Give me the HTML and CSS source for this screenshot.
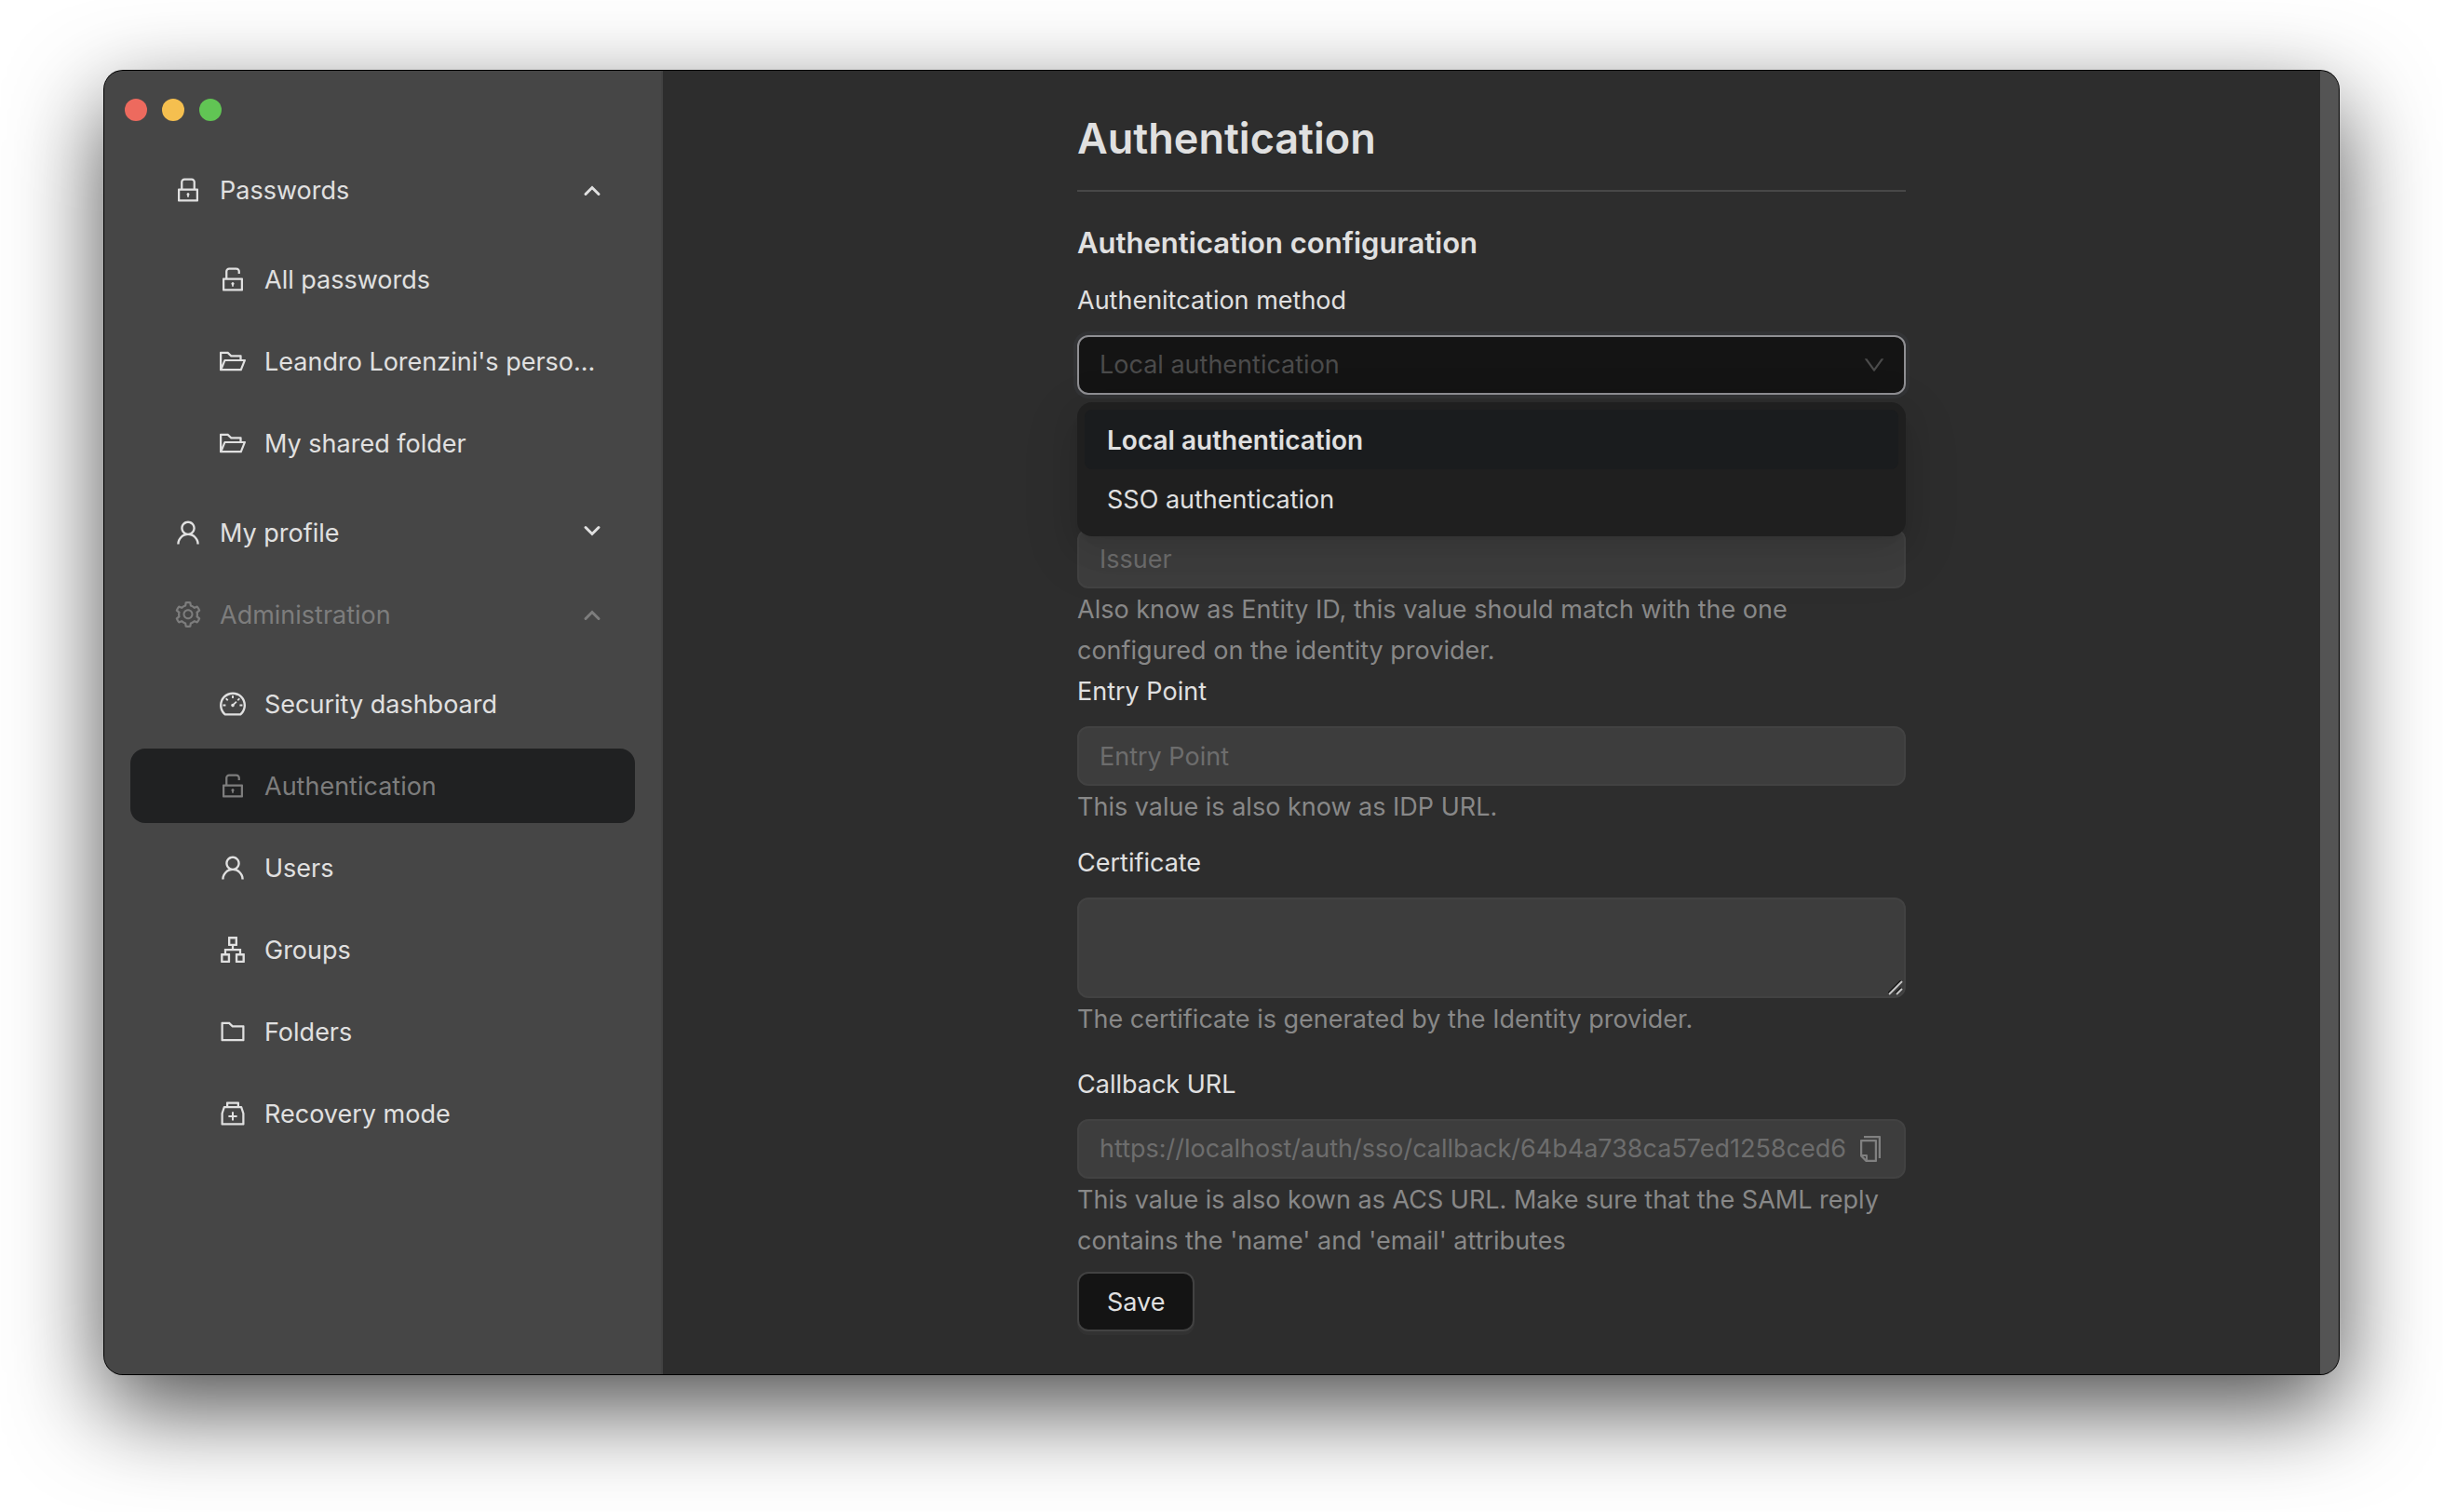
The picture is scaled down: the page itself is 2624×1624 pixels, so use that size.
FILE: index.html
```html
<!DOCTYPE html>
<html lang="en">
<head>
<meta charset="utf-8">
<meta name="viewport" content="width=device-width, initial-scale=1">
<title>Authentication</title>
<link rel="stylesheet" href="styles.css">
</head>
<body>
<svg class="sprite" aria-hidden="true">
  <symbol id="lock" viewBox="64 64 896 896"><path d="M832 464h-68V240c0-70.7-57.3-128-128-128H388c-70.7 0-128 57.3-128 128v224h-68c-17.7 0-32 14.3-32 32v384c0 17.7 14.3 32 32 32h640c17.7 0 32-14.3 32-32V496c0-17.7-14.3-32-32-32zM332 240c0-30.9 25.1-56 56-56h248c30.9 0 56 25.1 56 56v224H332V240zm460 600H232V536h560v304zM484 701v53c0 4.4 3.6 8 8 8h40c4.4 0 8-3.6 8-8v-53a48.01 48.01 0 10-56 0z"/></symbol>
  <symbol id="unlock" viewBox="64 64 896 896"><path d="M832 464H332V240c0-30.9 25.1-56 56-56h248c30.9 0 56 25.1 56 56v68c0 4.4 3.6 8 8 8h56c4.4 0 8-3.6 8-8v-68c0-70.7-57.3-128-128-128H388c-70.7 0-128 57.3-128 128v224h-68c-17.7 0-32 14.3-32 32v384c0 17.7 14.3 32 32 32h640c17.7 0 32-14.3 32-32V496c0-17.7-14.3-32-32-32zm-40 376H232V536h560v304zM484 701v53c0 4.4 3.6 8 8 8h40c4.4 0 8-3.6 8-8v-53a48.01 48.01 0 10-56 0z"/></symbol>
  <symbol id="folder-open" viewBox="64 64 896 896"><path d="M928 444H820V330.4c0-17.7-14.3-32-32-32H473L355.7 186.2a8.15 8.15 0 00-5.5-2.2H96c-17.7 0-32 14.3-32 32v592c0 17.7 14.3 32 32 32h698c13 0 24.8-7.9 29.7-20l134-332c1.5-3.8 2.3-7.9 2.3-12 0-17.7-14.3-32-32-32zM136 256h188.5l119.6 114.4H748V444H238c-13 0-24.8 7.9-29.7 20L136 643.2V256zm635.3 512H159l103.3-256h612.4L771.3 768z"/></symbol>
  <symbol id="folder" viewBox="64 64 896 896"><path d="M880 298.4H521L403.7 186.2a8.15 8.15 0 00-5.5-2.2H144c-17.7 0-32 14.3-32 32v592c0 17.7 14.3 32 32 32h736c17.7 0 32-14.3 32-32V330.4c0-17.7-14.3-32-32-32zM840 768H184V256h188.5l119.6 114.4H840V768z"/></symbol>
  <symbol id="user" viewBox="64 64 896 896"><path d="M858.5 763.6a374 374 0 00-80.6-119.5 375.63 375.63 0 00-119.5-80.6c-.4-.2-.8-.3-1.2-.5C719.5 518 760 444.7 760 362c0-137-111-248-248-248S264 225 264 362c0 82.7 40.5 156 102.8 201.1-.4.2-.8.3-1.2.5-44.8 18.9-85 46-119.5 80.6a375.63 375.63 0 00-80.6 119.5A371.7 371.7 0 00136 901.8a8 8 0 008 8.2h60c4.4 0 7.9-3.5 8-7.8 2-77.2 33-149.5 87.8-204.3 56.7-56.7 132-87.9 212.2-87.9s155.5 31.2 212.2 87.9C779 752.7 810 825 812 902.2c.1 4.4 3.6 7.8 8 7.8h60a8 8 0 008-8.2c-1-47.8-10.9-94.3-29.5-138.2zM512 534c-45.9 0-89.1-17.9-121.6-50.4S340 407.9 340 362c0-45.9 17.9-89.1 50.4-121.6S466.1 190 512 190s89.1 17.9 121.6 50.4S684 316.1 684 362c0 45.9-17.9 89.1-50.4 121.6S557.9 534 512 534z"/></symbol>
  <symbol id="gear" viewBox="64 64 896 896"><path d="M924.8 625.7l-65.5-56c3.1-19 4.7-38.4 4.7-57.8s-1.6-38.8-4.7-57.8l65.5-56a32.03 32.03 0 009.3-35.2l-.9-2.6a443.74 443.74 0 00-79.7-137.9l-1.8-2.1a32.12 32.12 0 00-35.1-9.5l-81.3 28.9c-30-24.6-63.5-44-99.7-57.6l-15.7-85a32.05 32.05 0 00-25.8-25.7l-2.7-.5c-52.1-9.4-106.9-9.4-159 0l-2.7.5a32.05 32.05 0 00-25.8 25.7l-15.8 85.4a351.86 351.86 0 00-99 57.4l-81.9-29.1a32 32 0 00-35.1 9.5l-1.8 2.1a446.02 446.02 0 00-79.7 137.9l-.9 2.6c-4.5 12.5-.8 26.5 9.3 35.2l66.3 56.6c-3.1 18.8-4.6 38-4.6 57.1 0 19.2 1.5 38.4 4.6 57.1L99 625.5a32.03 32.03 0 00-9.3 35.2l.9 2.6c18.1 50.4 44.9 96.9 79.7 137.9l1.8 2.1a32.12 32.12 0 0035.1 9.5l81.9-29.1c29.8 24.5 63.1 43.9 99 57.4l15.8 85.4a32.05 32.05 0 0025.8 25.7l2.7.5a449.4 449.4 0 00159 0l2.7-.5a32.05 32.05 0 0025.8-25.7l15.7-85a350 350 0 0099.7-57.6l81.3 28.9a32 32 0 0035.1-9.5l1.8-2.1c34.8-41.1 61.6-87.5 79.7-137.9l.9-2.6c4.5-12.3.8-26.3-9.3-35zM788.3 465.9c2.5 15.1 3.8 30.6 3.8 46.1s-1.3 31-3.8 46.1l-6.6 40.1 74.7 63.9a370.03 370.03 0 01-42.6 73.6L721 702.8l-31.4 25.8c-23.9 19.6-50.5 35-79.3 45.8l-38.1 14.3-17.9 97a377.5 377.5 0 01-85 0l-17.9-97.2-37.8-14.5c-28.5-10.8-55-26.2-78.7-45.7l-31.4-25.9-93.4 33.2c-17-22.9-31.2-47.6-42.6-73.6l75.5-64.5-6.5-40c-2.4-14.9-3.7-30.3-3.7-45.5 0-15.3 1.2-30.6 3.7-45.5l6.5-40-75.5-64.5c11.3-26.1 25.6-50.7 42.6-73.6l93.4 33.2 31.4-25.9c23.7-19.5 50.2-34.9 78.7-45.7l37.9-14.3 17.9-97.2c28.1-3.2 56.8-3.2 85 0l17.9 97 38.1 14.3c28.7 10.8 55.4 26.2 79.3 45.8l31.4 25.8 92.8-32.9c17 22.9 31.2 47.6 42.6 73.6L781.8 426l6.5 39.9zM512 326c-97.2 0-176 78.8-176 176s78.8 176 176 176 176-78.8 176-176-78.8-176-176-176zm79.2 255.2A111.6 111.6 0 01512 614c-29.9 0-58-11.7-79.2-32.8A111.6 111.6 0 01400 502c0-29.9 11.7-58 32.8-79.2C454 401.6 482.1 390 512 390c29.9 0 58 11.6 79.2 32.8A111.6 111.6 0 01624 502c0 29.9-11.7 58-32.8 79.2z"/></symbol>
  <symbol id="dashboard" viewBox="64 64 896 896"><path d="M924.8 385.6a446.7 446.7 0 00-96-142.4 446.7 446.7 0 00-142.4-96C631.1 123.8 572.5 112 512 112s-119.1 11.8-174.4 35.2a446.7 446.7 0 00-142.4 96 446.7 446.7 0 00-96 142.4C75.8 440.9 64 499.5 64 560c0 132.7 58.3 257.7 159.9 343.1l1.7 1.4c5.8 4.8 13.1 7.5 20.6 7.5h531.7c7.5 0 14.8-2.7 20.6-7.5l1.7-1.4C901.7 817.7 960 692.7 960 560c0-60.5-11.9-119.1-35.2-174.4zM761.4 836H262.6A371.12 371.12 0 01140 560c0-99.4 38.7-192.8 109-263 70.3-70.3 163.7-109 263-109 99.4 0 192.8 38.7 263 109 70.3 70.3 109 163.7 109 263 0 105.6-44.5 205.5-122.6 276zM623.5 421.5a8.03 8.03 0 00-11.3 0L527.7 506c-18.7-5-39.4-.2-54.1 14.5a55.95 55.95 0 000 79.2 55.95 55.95 0 0079.2 0 55.87 55.87 0 0014.5-54.1l84.5-84.5c3.1-3.1 3.1-8.2 0-11.3l-28.3-28.3zM490 320h44c4.4 0 8-3.6 8-8v-80c0-4.4-3.6-8-8-8h-44c-4.4 0-8 3.6-8 8v80c0 4.4 3.6 8 8 8zm260 218v44c0 4.4 3.6 8 8 8h80c4.4 0 8-3.6 8-8v-44c0-4.4-3.6-8-8-8h-80c-4.4 0-8 3.6-8 8zm12.7-197.2l-31.1-31.1a8.03 8.03 0 00-11.3 0l-56.6 56.6a8.03 8.03 0 000 11.3l31.1 31.1c3.1 3.1 8.2 3.1 11.3 0l56.6-56.6c3.1-3.1 3.1-8.2 0-11.3zm-458.6-31.1a8.03 8.03 0 00-11.3 0l-31.1 31.1a8.03 8.03 0 000 11.3l56.6 56.6c3.1 3.1 8.2 3.1 11.3 0l31.1-31.1c3.1-3.1 3.1-8.2 0-11.3l-56.6-56.6zM262 530h-80c-4.4 0-8 3.6-8 8v44c0 4.4 3.6 8 8 8h80c4.4 0 8-3.6 8-8v-44c0-4.4-3.6-8-8-8z"/></symbol>
  <symbol id="apartment" viewBox="64 64 896 896"><path d="M908 640H804V488c0-4.4-3.6-8-8-8H548v-96h108c8.8 0 16-7.2 16-16V80c0-8.8-7.2-16-16-16H368c-8.8 0-16 7.2-16 16v288c0 8.8 7.2 16 16 16h108v96H228c-4.4 0-8 3.6-8 8v152H116c-8.8 0-16 7.2-16 16v288c0 8.8 7.2 16 16 16h288c8.8 0 16-7.2 16-16V656c0-8.8-7.2-16-16-16H292v-88h440v88H620c-8.8 0-16 7.2-16 16v288c0 8.8 7.2 16 16 16h288c8.8 0 16-7.2 16-16V656c0-8.8-7.2-16-16-16zm-564 76v168H176V716h168zm84-408V140h168v168H428zm420 576H680V716h168v168z"/></symbol>
  <symbol id="medicine-box" viewBox="64 64 896 896"><path d="M839.2 278.1a32 32 0 00-30.4-22.1H736V144c0-17.7-14.3-32-32-32H320c-17.7 0-32 14.3-32 32v112h-72.8a31.9 31.9 0 00-30.4 22.1L112 502v378c0 17.7 14.3 32 32 32h736c17.7 0 32-14.3 32-32V502l-72.8-223.9zM360 184h304v72H360v-72zm480 656H184V513.4L244.3 328h535.4L840 513.4V840zM652 572H544V464c0-4.4-3.6-8-8-8h-48c-4.4 0-8 3.6-8 8v108H372c-4.4 0-8 3.6-8 8v48c0 4.4 3.6 8 8 8h108v108c0 4.4 3.6 8 8 8h48c4.4 0 8-3.6 8-8V636h108c4.4 0 8-3.6 8-8v-48c0-4.4-3.6-8-8-8z"/></symbol>
  <symbol id="copy" viewBox="64 64 896 896"><path d="M832 64H296c-4.4 0-8 3.6-8 8v56c0 4.4 3.6 8 8 8h496v688c0 4.4 3.6 8 8 8h56c4.4 0 8-3.6 8-8V96c0-17.7-14.3-32-32-32zM704 192H192c-17.7 0-32 14.3-32 32v530.7c0 8.5 3.4 16.6 9.4 22.6l173.3 173.3c2.2 2.2 4.7 4 7.4 5.5v1.9h4.2c3.5 1.3 7.2 2 11 2H704c17.7 0 32-14.3 32-32V224c0-17.7-14.3-32-32-32zM350 856.2L263.9 770H350v86.2zM664 888H414V746c0-22.1-17.9-40-40-40H232V264h432v624z"/></symbol>
  <symbol id="down" viewBox="64 64 896 896"><path d="M884 256h-75c-5.1 0-9.9 2.5-12.9 6.6L512 654.2 227.9 262.6c-3-4.1-7.8-6.6-12.9-6.6h-75c-6.5 0-10.3 7.4-6.5 12.7l352.6 486.1c12.8 17.6 39 17.6 51.7 0l352.6-486.1c3.9-5.3.1-12.7-6.4-12.7z"/></symbol>
  <symbol id="arrow-up" viewBox="0 0 20 20"><path d="M3 14.5L10 7.5L17 14.5" fill="none" stroke="currentColor" stroke-width="3" stroke-linecap="round"/></symbol>
  <symbol id="arrow-down" viewBox="0 0 20 20"><path d="M3 4.5L10 11.5L17 4.5" fill="none" stroke="currentColor" stroke-width="3" stroke-linecap="round"/></symbol>
  <symbol id="grip" viewBox="0 0 16 16"><path d="M0 14L14 0M8 14L14 8" stroke="#161616" stroke-width="2"/><path d="M1 15L15 1M9 15L15 9" stroke="#c4c4c4" stroke-width="2"/></symbol>
</svg>

<div class="window">
  <aside class="sidebar">
    <div class="traffic">
      <span class="light close"></span>
      <span class="light minimize"></span>
      <span class="light zoom"></span>
    </div>
    <nav>
      <ul class="menu">
        <li>
          <button class="item" type="button" aria-expanded="true"><svg class="icon"><use href="#lock"/></svg><span class="text">Passwords</span><svg class="arrow"><use href="#arrow-up"/></svg></button>
          <ul class="submenu">
            <li><a class="item" href="#all"><svg class="icon"><use href="#unlock"/></svg><span class="text">All passwords</span></a></li>
            <li><a class="item" href="#personal"><svg class="icon"><use href="#folder-open"/></svg><span class="text">Leandro Lorenzini's perso...</span></a></li>
            <li><a class="item" href="#shared"><svg class="icon"><use href="#folder-open"/></svg><span class="text">My shared folder</span></a></li>
          </ul>
        </li>
        <li>
          <button class="item" type="button" aria-expanded="false"><svg class="icon"><use href="#user"/></svg><span class="text">My profile</span><svg class="arrow"><use href="#arrow-down"/></svg></button>
        </li>
        <li>
          <button class="item active" type="button" aria-expanded="true"><svg class="icon"><use href="#gear"/></svg><span class="text">Administration</span><svg class="arrow"><use href="#arrow-up"/></svg></button>
          <ul class="submenu">
            <li><a class="item" href="#security"><svg class="icon"><use href="#dashboard"/></svg><span class="text">Security dashboard</span></a></li>
            <li><a class="item active selected" href="#authentication" aria-current="page"><svg class="icon"><use href="#unlock"/></svg><span class="text">Authentication</span></a></li>
            <li><a class="item" href="#users"><svg class="icon"><use href="#user"/></svg><span class="text">Users</span></a></li>
            <li><a class="item" href="#groups"><svg class="icon"><use href="#apartment"/></svg><span class="text">Groups</span></a></li>
            <li><a class="item" href="#folders"><svg class="icon"><use href="#folder"/></svg><span class="text">Folders</span></a></li>
            <li><a class="item" href="#recovery"><svg class="icon"><use href="#medicine-box"/></svg><span class="text">Recovery mode</span></a></li>
          </ul>
        </li>
      </ul>
    </nav>
  </aside>

  <main class="main">
    <form class="form">
      <h1>Authentication</h1>
      <h2>Authentication configuration</h2>
      <div class="field">
        <label for="method">Authenitcation method</label>
        <div class="select">
          <select id="method" class="control">
            <option>Local authentication</option>
            <option>SSO authentication</option>
          </select>
          <svg class="caret"><use href="#down"/></svg>
          <ul class="dropdown" role="listbox" aria-label="Authenitcation method">
            <li class="option chosen" role="option" aria-selected="true">Local authentication</li>
            <li class="option" role="option" aria-selected="false">SSO authentication</li>
          </ul>
        </div>
      </div>
      <div class="field issuer">
        <input id="issuer" class="control" type="text" placeholder="Issuer" aria-label="Issuer" disabled>
        <p class="help">Also know as Entity ID, this value should match with the one configured on the identity provider.</p>
      </div>
      <div class="field">
        <label for="entry">Entry Point</label>
        <input id="entry" class="control" type="text" placeholder="Entry Point" disabled>
        <p class="help">This value is also know as IDP URL.</p>
      </div>
      <div class="field certificate">
        <label for="certificate">Certificate</label>
        <div class="area">
          <textarea id="certificate" class="control" disabled></textarea>
          <svg class="grip"><use href="#grip"/></svg>
        </div>
        <p class="help">The certificate is generated by the Identity provider.</p>
      </div>
      <div class="field callback">
        <label for="callback">Callback URL</label>
        <div class="control affix">
          <input id="callback" type="text" value="https://localhost/auth/sso/callback/64b4a738ca57ed1258ced6" disabled>
          <button class="copy" type="button" aria-label="Copy"><svg class="icon"><use href="#copy"/></svg></button>
        </div>
        <p class="help">This value is also kown as ACS URL. Make sure that the SAML reply contains the 'name' and 'email' attributes</p>
      </div>
      <button class="save" type="submit">Save</button>
    </form>
  </main>
  <div class="scrollbar"></div>
</div>
</body>
</html>
```

FILE: styles.css
```css
*, *::before, *::after { box-sizing: border-box; }

body {
  margin: 0;
  padding: 76px 112px 148px;
  background: #fff;
  color: #e0e0e0;
  font-family: Inter, "Liberation Sans", sans-serif;
  font-size: 27px;
  line-height: 44px;
}

button, input, select, textarea { font: inherit; color: inherit; }
h1, h2, p, ul { margin: 0; padding: 0; }
ul { list-style: none; }
.sprite { position: absolute; width: 0; height: 0; }
svg { fill: currentColor; flex: none; }

.window {
  display: grid;
  grid-template-columns: 600px minmax(0, 1fr) 20px;
  border-radius: 20px;
  overflow: hidden;
  background: #2d2d2d;
  box-shadow: 0 0 0 1px #000, 0 36px 100px rgba(0, 0, 0, 0.7);
}

/* Sidebar */
.sidebar {
  padding: 30px 30px 48px 22px;
  background: #464646;
  box-shadow: inset -2px 0 0 #424242;
}
.traffic { display: flex; gap: 16px; margin-bottom: 34px; }
.light { width: 24px; height: 24px; border-radius: 50%; }
.close { background: #ed6a5e; }
.minimize { background: #f5bf4f; }
.zoom { background: #61c554; }

.menu, .submenu { display: flex; flex-direction: column; gap: 8px; }
.menu { margin-left: 6px; }
.submenu { padding: 16px 0 8px; }
.item {
  display: flex;
  align-items: center;
  gap: 20px;
  width: 100%;
  height: 80px;
  padding: 0 36px 0 48px;
  border: 0;
  border-radius: 16px;
  background: none;
  text-align: left;
  text-decoration: none;
  color: #e0e0e0;
}
.submenu .item { padding-left: 96px; }
.text { flex: 1; padding-top: 2px; white-space: nowrap; }
.icon { display: block; width: 28px; height: 28px; }
.arrow { width: 20px; height: 20px; }
.active { color: #7d7d7d; }
.selected { background: #202122; }

/* Form */
.main { padding: 44px 25% 46px; }
.form { display: flex; flex-direction: column; align-items: stretch; }
h1 {
  padding-bottom: 26px;
  border-bottom: 2px solid #484848;
  font-size: 45px;
  line-height: 58px;
  font-weight: 600;
}
h2 { margin: 32px 0 16px; font-size: 31px; line-height: 46px; font-weight: 600; }

.field { display: flex; flex-direction: column; }
label, .help { padding-top: 2px; line-height: 42px; }
.help { line-height: 44px; padding-top: 1px; margin-bottom: -1px; color: #888; }
label { margin-bottom: 16px; }
.issuer { margin-top: 144px; }
.certificate { margin-top: 16px; }
.callback { margin-top: 26px; }

.control {
  width: 100%;
  height: 64px;
  padding: 0 22px;
  border: 2px solid #424242;
  border-radius: 12px;
  background: #3d3d3d;
  color: #6d6d6d;
  outline: 0;
}
.control::placeholder { color: #6d6d6d; opacity: 1; }
.area { position: relative; }
textarea.control { display: block; height: 108px; resize: none; }
.grip {
  position: absolute;
  right: 3px;
  bottom: 3px;
  width: 16px;
  height: 16px;
}
.affix { display: flex; align-items: center; gap: 6px; }
.affix input {
  flex: 1;
  min-width: 0;
  height: 44px;
  padding: 0;
  border: 0;
  background: none;
}
.copy { padding: 0; border: 0; background: none; color: #808080; }

.select { position: relative; }
select.control {
  display: block;
  appearance: none;
  border-color: #8f8f93;
  background: #141414;
  color: #4b4b4b;
  box-shadow: 0 0 0 4px #323335;
}
.caret {
  position: absolute;
  top: 20px;
  right: 22px;
  width: 24px;
  height: 24px;
  color: #4b4b4b;
}
.dropdown {
  position: absolute;
  z-index: 1;
  top: 72px;
  left: 0;
  right: 0;
  padding: 8px;
  border-radius: 16px;
  background: #1f1f1f;
  box-shadow: 0 12px 32px rgba(0, 0, 0, 0.08), 0 6px 12px -8px rgba(0, 0, 0, 0.12), 0 18px 56px 16px rgba(0, 0, 0, 0.05);
}
.option { padding: 11px 24px 9px; border-radius: 8px; }
.chosen { background: #1a1c1e; font-size: 28px; font-weight: 600; }

.save {
  align-self: flex-start;
  height: 64px;
  margin-top: 12px;
  padding: 2px 30px 0;
  border: 2px solid #424242;
  border-radius: 12px;
  background: #141414;
  box-shadow: 0 4px 0 #323232;
}

.scrollbar { background: #545454; }
```
